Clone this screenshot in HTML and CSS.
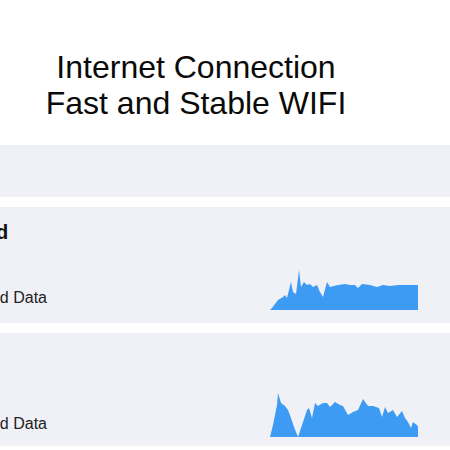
FILE: index.html
```html
<!DOCTYPE html>
<html lang="en">
<head>
<meta charset="utf-8">
<title>Internet Connection</title>
<link rel="stylesheet" href="styles.css">
</head>
<body>
<main class="page">
  <header class="hero">
    <h1 class="hero-title">Internet Connection<br>Fast and Stable WIFI</h1>
  </header>

  <section class="panel panel-summary"></section>

  <section class="panel panel-download">
    <div class="info">
      <h2 class="info-title">Download Speed</h2>
      <p class="info-label">Downloaded Data</p>
    </div>
    <svg class="chart" width="150" height="42" viewBox="270 268 150 42" aria-hidden="true">
      <path class="chart-area" d="M270,310 L272,308 L278,300 L283,297 L285,295 L287,298 L291,282 L293,292 L296,294 L299,270 L301,287 L304,282 L307,285 L310,284 L313,287 L317,285 L320,292 L323,297 L327,282 L330,287 L338,285 L345,284 L350,285 L355,285 L358,288 L362,284 L370,285 L377,287 L383,285 L390,286 L398,285 L405,285 L418,285 L418,310 Z"/>
    </svg>
  </section>

  <section class="panel panel-upload">
    <div class="info">
      <p class="info-label">Uploaded Data</p>
    </div>
    <svg class="chart" width="150" height="47" viewBox="270 390 150 47" aria-hidden="true">
      <path class="chart-area" d="M270,437 L273,425 L277,405 L278,393 L281,403 L285,406 L288,410 L291,418 L294,427 L298,437 L302,425 L307,410 L309,408 L312,418 L315,403 L318,406 L323,403 L327,403 L330,407 L335,402 L340,405 L343,406 L348,415 L353,412 L358,410 L363,399 L368,406 L373,406 L379,408 L382,417 L385,407 L388,413 L393,410 L397,417 L402,411 L405,418 L408,422 L411,428 L413,422 L418,426 L418,437 Z"/>
    </svg>
  </section>
</main>
</body>
</html>
```

FILE: styles.css
```css
html, body {
  margin: 0;
  padding: 0;
  background: #ffffff;
  overflow: hidden;
}

body {
  font-family: "Liberation Sans", Arial, sans-serif;
  color: #111111;
}

.page {
  width: 450px;
  display: flex;
  flex-direction: column;
  gap: 10px;
}

.hero {
  width: 392px;
  margin-top: 49px;
  margin-bottom: 14px;
}

.hero-title {
  margin: 0;
  font-size: 32px;
  line-height: 36px;
  font-weight: 400;
  text-align: center;
  color: #0a0a0a;
}

.panel {
  background: #eff1f6;
  display: flex;
  justify-content: space-between;
  align-items: flex-end;
  padding: 14px 30px 13px 0;
}

.panel-summary {
  height: 52px;
  padding: 0;
  box-sizing: border-box;
}

.info {
  align-self: flex-start;
  width: 200px;
  margin-left: -153px;
  text-align: right;
  white-space: nowrap;
  padding-bottom: 3px;
}

.info-title {
  margin: 0 40px 0 0;
  font-size: 20px;
  line-height: 23px;
  font-weight: 700;
  color: #111111;
}

.info-label {
  margin: 45px 0 0;
  font-size: 16px;
  line-height: 18px;
  color: #222222;
}

.panel-upload {
  padding-bottom: 9px;
}

.panel-upload .info {
  padding-top: 23px;
  padding-bottom: 4px;
}

.chart {
  display: block;
  flex: none;
}

.chart-area {
  fill: #3d9bf4;
}
```
